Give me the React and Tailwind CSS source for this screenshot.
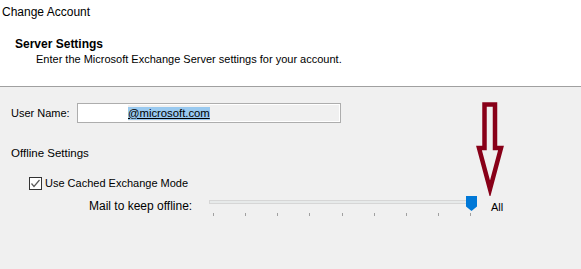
import React from "react";

const ticks = [0, 1, 2, 3, 4, 5, 6, 7, 8];

function CheckBox() {
  return (
    <div className="w-[13px] h-[13px] border border-[#333333] bg-white flex items-center justify-center">
      <svg width="11" height="11" viewBox="0 0 11 11">
        <polyline points="1.5,5.5 4,8.5 9.5,2" fill="none" stroke="#5a5a5a" strokeWidth="1.2" />
      </svg>
    </div>
  );
}

function Slider() {
  return (
    <div className="relative w-[263px] h-[22px]">
      <div className="mt-[4px] h-[4px] bg-[#e7eaea] border border-[#d6d6d6]" />
      <div className="ml-[4px] mt-[9px] w-[258px] h-[3px] flex justify-between">
        {ticks.map((t) => (
          <div key={t} className="w-px h-[3px] bg-[#a0a0a0]" />
        ))}
      </div>
      {/* thumb */}
      <svg className="absolute left-[257px] top-0" width="11" height="15" viewBox="0 0 11 15">
        <path d="M0 0 H11 V10.5 L5.5 15 L0 10.5 Z" fill="#0078d7" />
      </svg>
    </div>
  );
}

export default function App() {
  return (
    <div className="relative w-[581px] h-[269px] overflow-hidden bg-[#f0f0f0] text-[11px] text-black font-['Liberation_Sans',Arial,sans-serif]">
      {/* ── Header ── */}
      <div className="h-[87px] bg-white border-b border-[#a0a0a0]">
        <div className="pl-[2px] pt-[4px] leading-[16px] text-[12px]">Change Account</div>
        <div className="pl-[15px] mt-[17px] leading-[15px] text-[12px] font-bold">Server Settings</div>
        <div className="pl-[36px] leading-[15px]">Enter the Microsoft Exchange Server settings for your account.</div>
      </div>

      {/* ── User name ── */}
      <div className="flex items-center pl-[11px] pt-[16px]">
        <div className="w-[66px] leading-[16px]">User Name:</div>
        <div className="w-[264px] h-[20px] border border-[#adadad]">
          <div className="h-full border border-white bg-[#f0f0f0] flex items-center">
            <div className="w-[49px] h-full bg-white" />
            <span className="bg-[#99c9ef] underline leading-[13px] text-[11.3px]">@microsoft.com</span>
          </div>
        </div>
      </div>

      {/* ── Offline settings ── */}
      <div className="pl-[11px] mt-[22px] leading-[16px] text-[11.5px]">Offline Settings</div>
      <div className="pl-[29px] mt-[14px] flex items-center gap-[3px]">
        <CheckBox />
        <span className="leading-[16px]">Use Cached Exchange Mode</span>
      </div>
      <div className="mt-[5px] flex items-start">
        <div className="pl-[89px] w-[209px] mt-[2px] leading-[16px] text-[12px]">Mail to keep offline:</div>
        <Slider />
        <div className="ml-[19px] mt-[3px] leading-[16px]">All</div>
      </div>

      {/* ── Annotation arrow ── */}
      <svg className="absolute left-[474px] top-[100px]" width="32" height="96" viewBox="0 0 32 96">
        <polygon
          points="10.5,4.5 21,4.5 21,48 27,48 16,89 5,48 10.5,48"
          fill="none"
          stroke="#880018"
          strokeWidth="4.5"
          strokeLinejoin="miter"
        />
      </svg>
    </div>
  );
}
